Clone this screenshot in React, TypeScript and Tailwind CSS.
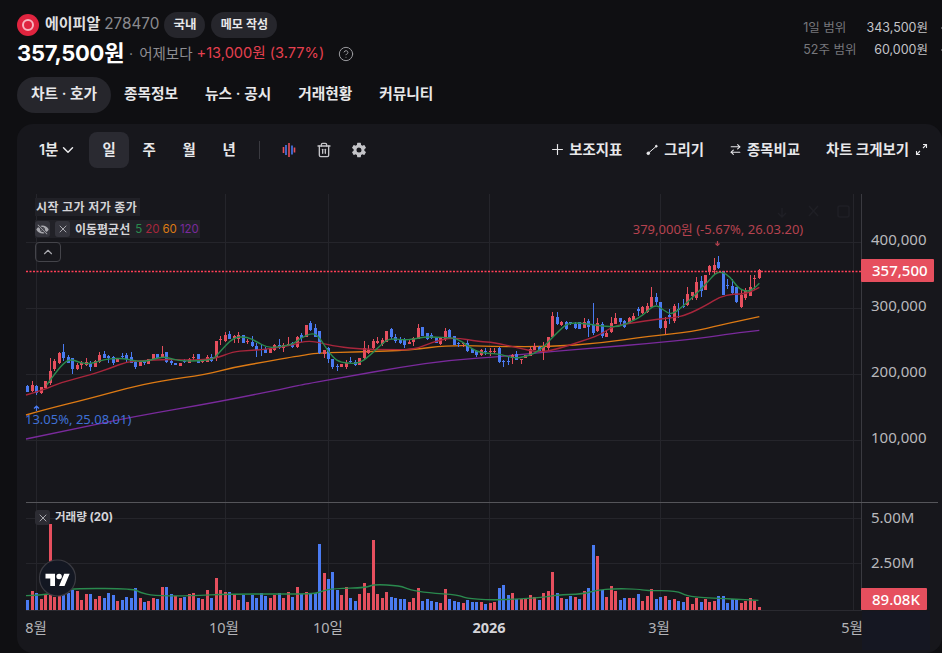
import React from 'react';
import { ArrowRightLeft, ChevronDown, ChevronUp, CircleHelp, Plus, Trash2, X } from 'lucide-react';
import { IoEyeOff, IoSettingsSharp } from 'react-icons/io5';

const RED = '#e64f5e';
const BLUE = '#4a7bf2';

type Row = [number, number, number, number?, number?];

const seg = (base: number, rows: Row[]) =>
  rows.map(([up, t, b, wt, wb]) => ({
    up: up === 1,
    top: base + t / 3,
    bottom: base + b / 3,
    high: base + (wt ?? t) / 3,
    low: base + (wb ?? b) / 3,
  }));

const candles = [
  ...seg(290, [
    [0, 288, 305, 285, 307], [1, 285, 303, 273, 305], [0, 288, 310, 285, 315], [1, 292, 310, 290, 312], [1, 273, 293],
    [1, 243, 280, 205, 285], [1, 212, 238, 208, 242], [1, 188, 218, 185, 222], [0, 185, 205, 162, 212], [0, 200, 218, 195, 220],
    [0, 205, 236, 205, 252], [1, 224, 236, 220, 240], [1, 220, 224, 214, 236], [1, 215, 225, 205, 228], [0, 218, 230, 214, 242],
    [1, 212, 230, 210, 232], [1, 195, 215, 185, 218], [0, 192, 203, 182, 205], [0, 197, 205, 195, 218], [0, 200, 220, 198, 225],
    [1, 205, 216], [0, 197, 200, 190, 208], [0, 195, 208, 190, 215], [0, 200, 218, 185, 220], [0, 215, 230, 212, 236],
    [1, 215, 227], [0, 213, 220, 212, 224], [1, 208, 222], [1, 192, 208], [0, 192, 203],
    [1, 192, 202, 168, 204], [0, 187, 215, 187, 218], [0, 214, 220, 210, 224], [0, 218, 226], [1, 218, 228],
    [0, 213, 216, 207, 220], [1, 208, 218, 205, 220], [1, 200, 203, 192, 210], [0, 193, 218], [1, 214, 216, 208, 220],
    [1, 200, 215, 195, 215], [0, 200, 213, 192, 215], [1, 153, 205, 153, 213], [1, 148, 151, 138, 165], [1, 135, 152, 127, 155],
    [0, 131, 146, 123, 148], [1, 138, 143, 135, 158], [1, 135, 146, 127, 160], [0, 135, 160], [1, 152, 155, 148, 162],
    [0, 155, 168, 138, 172], [0, 168, 180, 160, 200], [0, 176, 180, 165, 198], [0, 178, 188, 170, 190], [1, 175, 188],
    [1, 165, 180, 162, 182], [0, 165, 175, 148, 178], [1, 165, 173, 158, 185], [1, 162, 165, 140, 168], [0, 158, 172, 155, 175],
    [1, 142, 172, 138, 175],
  ]),
  ...seg(280, [
    [0, 165, 175, 160, 185], [1, 135, 170], [0, 130, 150, 123, 152], [0, 145, 170, 133, 172], [0, 153, 218, 153, 222],
    [1, 210, 222, 210, 235], [0, 203, 238, 200, 250], [0, 236, 262, 236, 268], [0, 257, 259, 252, 272], [1, 252, 262],
    [1, 248, 262, 240, 268], [0, 243, 247, 232, 250], [0, 245, 255, 240, 258], [1, 234, 255], [1, 203, 235, 183, 238],
    [1, 210, 220, 195, 222], [1, 183, 205, 178, 210], [1, 184, 190, 172, 192], [1, 180, 192, 175, 198], [1, 152, 185],
    [0, 147, 172, 145, 178], [0, 170, 183, 163, 188], [0, 176, 188, 170, 192], [0, 178, 195, 175, 203], [1, 185, 191, 178, 193],
    [1, 175, 187, 172, 197], [1, 145, 177, 133, 178], [0, 142, 168], [0, 160, 178, 158, 180], [0, 165, 175, 160, 178],
    [0, 170, 188], [1, 175, 192, 172, 195], [1, 152, 178, 143, 182], [0, 150, 173, 148, 178], [0, 168, 195],
    [0, 188, 193, 185, 200], [1, 190, 192, 185, 200], [0, 190, 212, 178, 215], [0, 208, 220], [0, 212, 226, 210, 230],
    [1, 210, 224, 208, 228], [0, 212, 215, 205, 225], [1, 212, 214, 205, 228], [1, 212, 215, 205, 222], [0, 205, 247, 200, 250],
    [0, 244, 246, 240, 262], [0, 242, 245, 228, 256], [1, 225, 235, 222, 252], [0, 222, 240, 212, 240], [1, 236, 238, 236, 252],
    [1, 225, 233], [1, 207, 228, 202, 228], [1, 198, 210, 190, 210], [0, 202, 214, 198, 215], [1, 202, 212, 186, 240],
    [1, 170, 205, 170, 210], [1, 108, 170, 97, 172], [0, 112, 132, 97, 135], [1, 125, 135, 122, 137], [0, 126, 148, 122, 150],
    [0, 127, 133, 125, 135], [0, 133, 145, 125, 148], [0, 127, 148], [1, 125, 143, 115, 145], [0, 122, 140, 118, 170],
    [0, 135, 158, 68, 165], [1, 128, 153, 115, 155],
  ]),
  ...seg(190, [
    [0, 402, 438, 395, 445], [1, 430, 440, 420, 442], [1, 400, 425, 380, 430], [1, 385, 402, 370, 403], [0, 385, 395, 383, 405],
    [0, 393, 412, 390, 415], [1, 385, 402, 380, 403], [1, 378, 390, 368, 392], [0, 357, 362, 352, 378], [1, 350, 370, 348, 372],
    [1, 347, 365, 340, 370], [1, 322, 350, 292, 352], [0, 322, 336, 310, 345], [0, 337, 415, 337, 418], [1, 393, 415, 380, 432],
    [0, 376, 380, 358, 402], [1, 347, 392, 342, 400], [0, 357, 360, 338, 384], [0, 347, 350, 328, 353], [1, 312, 345, 292, 348],
    [1, 307, 317, 305, 330], [1, 277, 325, 262, 330], [0, 272, 303, 258, 322], [1, 255, 300], [1, 228, 245, 225, 255],
    [1, 225, 240, 203, 255], [0, 215, 235, 198, 238], [0, 243, 315], [0, 285, 288, 268, 298], [0, 288, 310, 268, 312],
    [0, 290, 337, 290, 340], [1, 315, 350, 298, 355], [1, 300, 323, 295, 330], [1, 290, 317, 255, 318], [1, 265, 267, 255, 300],
    [1, 240, 265, 238, 268],
  ]),
];

// positive = red bar, negative = blue bar, measured in thirds of a pixel
const volumes = [
  -30, 57, -50, 33, 45, 258, 40, 45, -45, -50, -60, 57, 30, 48, -48, 33, 42, -36, -51, -45, 27, -30, -39, -36, -66, 36, -24, 27, 36, -33, 69,
  -69, -48, 42, 36, -39, 48, 51, -36, 33, 60, -36, 96, 60, 54, -54, 48, 30, -45, 24, -45, -36, -51, -42, 36, 45, -51, 36, 54, -39, 69, -48,
  54, -51, -51, -198, 111, -93, -114, -60, 45, 69, -36, -27, 48, 81, 51, 210, 48, 36, 54, -39, -36, -33, -33, 24, 36, 66, -27, -33, -27, -24,
  21, 63, -33, -27, -24, 21, -30, -24, -24, 24, -18, 21, 24, -66, -75, -45, 51, -33, 33, 33, 45, 39, -30, 51, 57, 114, -51, 36, -33, -42, 39,
  -33, 57, -66, -195, 162, -60, 39, 72, 57, -30, -36, 36, 36, -48, 27, 42, 63, -33, -39, 42, -30, 33, -27, -24, 39, 18, 36, -24, 33, 24, 27,
  -42, -42, -21, -33, -33, 21, 27, 36, 27, 9,
];

const barX = (i: number) => Math.round(27.3 + i * 4.488);

const pts = (x0: number, y0: number, sx: number, list: number[][]) => list.map(([x, y]) => [x0 + x / sx, y0 + y / 3]);

const smooth = (p: number[][]) => {
  let d = `M${p[0][0]} ${p[0][1]}`;
  for (let i = 1; i < p.length - 1; i++) {
    const mx = (p[i][0] + p[i + 1][0]) / 2;
    const my = (p[i][1] + p[i + 1][1]) / 2;
    d += ` Q${p[i][0]} ${p[i][1]} ${mx} ${my}`;
  }
  const last = p[p.length - 1];
  return `${d} L${last[0]} ${last[1]}`;
};

const ma5 = [
  ...pts(0, 290, 3, [[140, 285], [165, 250], [195, 215], [215, 208], [240, 218], [270, 222], [300, 212], [330, 206], [370, 205], [400, 212], [430, 215], [460, 208], [490, 200], [510, 205], [540, 213], [600, 213], [640, 208], [660, 185], [700, 142], [740, 140], [770, 155], [800, 172], [830, 172], [880, 162]]),
  ...pts(300, 280, 3, [[0, 175], [40, 157], [60, 175], [85, 215], [110, 243], [140, 250], [180, 250], [215, 222], [250, 188], [270, 175], [310, 180], [340, 178], [375, 170], [410, 172], [440, 172], [470, 175], [500, 195], [530, 215], [560, 220], [600, 222], [640, 235], [680, 230], [720, 212], [750, 180], [790, 140], [810, 128], [850, 130]]),
  ...pts(600, 190, 3, [[20, 410], [60, 410], [100, 392], [130, 375], [165, 342], [190, 360], [215, 375], [245, 352], [280, 320], [320, 280], [345, 250], [365, 245], [390, 260], [415, 295], [440, 305], [460, 298], [478, 280]]),
];
const ma20 = [
  ...pts(0, 290, 3, [[78, 315], [130, 300], [180, 278], [270, 255], [330, 235], [380, 215], [430, 212], [500, 208], [560, 210], [640, 208], [700, 185], [740, 182], [800, 178], [880, 165]]),
  ...pts(300, 280, 3, [[0, 187], [30, 183], [60, 188], [110, 200], [190, 208], [260, 208], [340, 210], [400, 185], [460, 172], [540, 185], [580, 187], [660, 205], [720, 218], [780, 205], [840, 185], [900, 165]]),
  ...pts(600, 190, 3, [[40, 408], [100, 398], [170, 388], [220, 383], [260, 375], [320, 345], [360, 320], [400, 312], [440, 312], [478, 292]]),
];
const ma60 = [
  ...pts(0, 190, 3, [[78, 675], [130, 660], [270, 625], [380, 595], [480, 573], [620, 553], [700, 532], [800, 515], [880, 500]]),
  ...pts(300, 280, 3, [[0, 228], [50, 218], [190, 216], [330, 210], [450, 195], [600, 200], [750, 200], [900, 190]]),
  ...pts(600, 190, 3, [[150, 438], [280, 425], [360, 405], [478, 380]]),
];
const ma120 = [
  ...pts(0, 190, 3, [[78, 747], [200, 722], [400, 680], [660, 635], [880, 590]]),
  ...pts(300, 280, 3, [[0, 315], [140, 290], [300, 262], [450, 240], [600, 230], [750, 215], [900, 203]]),
  ...pts(600, 190, 3, [[150, 460], [300, 445], [400, 430], [478, 421]]),
];
const volMa = [
  ...pts(0, 495, 3, [[78, 302], [140, 300], [200, 285], [230, 280], [400, 281], [420, 293], [460, 302], [560, 303], [700, 296], [940, 298], [970, 287], [1000, 281], [1100, 278], [1120, 268]]),
  ...pts(400, 495, 2.893, [[0, 272], [30, 285], [80, 293], [170, 300], [190, 310], [260, 315], [340, 312], [420, 307], [450, 300], [530, 297], [570, 285], [620, 281], [690, 282], [710, 287], [800, 287], [830, 303], [880, 308], [1037, 316]]),
];

const AXIS_FONT = "'Noto Sans','Noto Sans CJK KR',sans-serif";

const Chart = () => (
  <svg viewBox="17 180 925 473" width={925} height={473} className="block" fontFamily={AXIS_FONT}>
    {/* grid */}
    {[242, 308, 374, 440, 518, 563].map((y) => (
      <line key={y} x1={26} x2={862} y1={y + 0.5} y2={y + 0.5} stroke="#25252b" />
    ))}
    {[36, 225, 328, 489, 660, 853].map((x) => (
      <line key={x} x1={x + 0.5} x2={x + 0.5} y1={194} y2={610} stroke="#25252b" />
    ))}

    {/* moving averages under the candles */}
    <path d={smooth(ma120)} fill="none" stroke="#7a2a9c" strokeWidth={1.4} />
    <path d={smooth(ma60)} fill="none" stroke="#dd7a14" strokeWidth={1.4} />

    {/* candles */}
    <g shapeRendering="crispEdges">
      {candles.map((c, i) => {
        const x = barX(i);
        const fill = c.up ? RED : BLUE;
        return (
          <g key={i} fill={fill}>
            <rect x={x} y={c.high} width={1} height={c.low - c.high} />
            <rect x={x - 1} y={c.top} width={3} height={Math.max(c.bottom - c.top, 1)} />
          </g>
        );
      })}
    </g>
    <path d={smooth(ma20)} fill="none" stroke="#a8263c" strokeWidth={1.4} />
    <path d={smooth(ma5)} fill="none" stroke="#2a8a4e" strokeWidth={1.4} />

    {/* last price */}
    <line x1={26} x2={861} y1={271.5} y2={271.5} stroke="#ff3f56" strokeWidth={1.4} strokeDasharray="2 1.500" />

    {/* high and low marks */}
    <text x={718} y={234} textAnchor="middle" fontSize={13} fill="#b5424f">
      379,000원 (-5.67%, 26.03.20)
    </text>
    <path d="M717.5 241v3M715.5 243.5l2 2 2-2" stroke="#b5424f" strokeWidth={1.2} fill="none" />
    <text x={25} y={424} fontSize={13} fill="#3f70d6">
      13.05%, 25.08.01)
    </text>
    <path d="M36.5 411v-4M34 408.5l2.5-2.5 2.5 2.5" stroke="#4a7bf2" strokeWidth={1.2} fill="none" />

    {/* faint chart tools */}
    <g stroke="#1f1f25" strokeWidth={1.5} fill="none">
      <path d="M782 208v9M778 213l4 4 4-4" />
      <path d="M809 206l9 10M818 206l-9 10" />
      <rect x={838} y={206} width={11} height={11} rx={2} />
    </g>

    {/* volume */}
    <g shapeRendering="crispEdges">
      {volumes.map((v, i) => {
        const h = Math.abs(v) / 3;
        return <rect key={i} x={barX(i) - 1} y={610 - h} width={3} height={h} fill={v > 0 ? RED : BLUE} />;
      })}
    </g>
    <path d={smooth(volMa)} fill="none" stroke="#2a8a4e" strokeWidth={1.4} />
    <line x1={26} x2={862} y1={610.5} y2={610.5} stroke="#2a2a30" />

    {/* time axis */}
    <g fontSize={14.5} fill="#b4b4b8" textAnchor="middle">
      <text x={36} y={633}>8월</text>
      <text x={224} y={633}>10월</text>
      <text x={328} y={633}>10일</text>
      <text x={489} y={633} fontWeight={700} fill="#d4d4d8">2026</text>
      <text x={659} y={633}>3월</text>
      <text x={852} y={633}>5월</text>
    </g>

    {/* price axis */}
    <rect x={862} y={611} width={68} height={39} fill="#151722" />
    <rect x={862} y={194} width={80} height={416} fill="#17171c" />
    <line x1={861.5} x2={861.5} y1={194} y2={610} stroke="#3a3a40" />
    <g fontSize={15} fill="#b9b9bd">
      <text x={871} y={245}>400,000</text>
      <text x={871} y={311}>300,000</text>
      <text x={871} y={377}>200,000</text>
      <text x={871} y={443}>100,000</text>
      <text x={871} y={523}>5.00M</text>
      <text x={871} y={568}>2.50M</text>
    </g>
    <rect x={861} y={259} width={73} height={23} rx={1} fill={RED} />
    <text x={872} y={276} fontSize={15} fontWeight={500} fill="#fff">357,500</text>
    <rect x={861} y={588} width={66} height={22} rx={1} fill={RED} />
    <text x={872} y={605} fontSize={15} fontWeight={500} fill="#fff">89.08K</text>

    {/* pane separator */}
    <line x1={26} x2={938} y1={502.5} y2={502.5} stroke="#55555a" />

    {/* TradingView mark */}
    <circle cx={57.5} cy={578} r={18} fill="#131722" stroke="#3b3b42" strokeWidth={1.2} />
    <g transform="translate(45.5 571) scale(0.68)" fill="#fff">
      <path d="M14 22H7V11H0V4h14v18zM28 22h-8l7.5-18h8L28 22z" />
      <circle cx={20} cy={8} r={4} />
    </g>
  </svg>
);

const Legend = () => (
  <div className="absolute left-[18px] top-[18px] flex flex-col items-start gap-[4px] text-[12px] font-bold text-[#d4d4d8]">
    <div className="flex h-[18px] w-[105px] items-center bg-[#212127] px-px pt-[2px] tracking-[0.4px]">시작 고가 저가 종가</div>
    <div className="flex h-[18px] items-center gap-[5px] bg-[#212127] pr-px">
      <span className="flex h-[16px] w-[15px] items-center justify-center rounded-[3px] bg-[#34343c] text-[#a8a8ae]">
        <IoEyeOff size={13} />
      </span>
      <span className="flex h-[16px] w-[15px] items-center justify-center rounded-[3px] bg-[#34343c] text-[#a8a8ae]">
        <X size={12} />
      </span>
      <span className="pt-[1px]">이동평균선</span>
      <span className="flex gap-[3px] pt-[1px] text-[11.5px] font-normal">
        <span className="text-[#2a8a4e]">5</span>
        <span className="text-[#a8263c]">20</span>
        <span className="text-[#dd7a14]">60</span>
        <span className="text-[#7a2a9c]">120</span>
      </span>
    </div>
    <button className="flex h-[20px] w-[26px] items-center justify-center rounded-[4px] border border-[#44444a] text-[#a8a8ae]">
      <ChevronUp size={14} />
    </button>
  </div>
);

const VolumeLegend = () => (
  <div className="absolute left-[18px] top-[329px] flex items-center gap-[5px] text-[11.5px] font-bold text-[#d4d4d8]">
    <span className="flex h-[15px] w-[15px] items-center justify-center rounded-[3px] bg-[#2c2c33] text-[#a8a8ae]">
      <X size={12} />
    </span>
    <span>거래량 (20)</span>
  </div>
);

const tabs = ['종목정보', '뉴스 · 공시', '거래현황', '커뮤니티'];
const periods = ['주', '월', '년'];

const App = () => (
  <div className="h-[653px] w-[942px] overflow-hidden bg-[#0f0f12] pl-[17px] font-['Inter','Noto_Sans_CJK_KR',sans-serif] text-[#e8e8ea]">
    {/* stock header */}
    <div className="flex h-[77px] justify-between">
      <div className="pt-[12px]">
        <div className="flex h-[26px] items-center">
          <span className="flex h-[22px] w-[22px] items-center justify-center rounded-full bg-[#e0243f]">
            <span className="h-[12px] w-[12px] rounded-full border-2 border-[#f7b4bf]" />
          </span>
          <span className="ml-[6px] pb-[1px] text-[15px] font-semibold text-[#e0e0e2]">에이피알</span>
          <span className="ml-[4px] pb-[1px] text-[15.3px] text-[#8a8a8e]">278470</span>
          <span className="ml-[5px] flex h-[26px] w-[41px] items-center justify-center rounded-full bg-[#26262c] text-[12.5px] font-semibold">국내</span>
          <span className="ml-[6px] flex h-[26px] w-[66px] items-center justify-center rounded-full bg-[#26262c] text-[12px] font-semibold">메모 작성</span>
        </div>
        <div className="flex h-[30px] items-center pt-[1px]">
          <span className="text-[22px] font-bold tracking-[-0.3px] text-white">357,500원</span>
          <span className="ml-[5px] text-[14px] text-[#8e8e93]">·</span>
          <span className="ml-[6px] text-[14.5px] text-[#8e8e93]">어제보다</span>
          <span className="ml-[4px] text-[14.6px] text-[#e5404f]">+13,000원 (3.77%)</span>
          <CircleHelp size={16} className="ml-[14px] text-[#9a9a9e]" strokeWidth={1.5} />
        </div>
      </div>
      <div className="flex pt-[17px] text-[12.5px] leading-[22px]">
        <div className="text-[#77777c]">
          <div>1일 범위</div>
          <div>52주 범위</div>
        </div>
        <div className="ml-[10px] text-right text-[#c4c4c8]">
          <div>343,500원</div>
          <div>60,000원</div>
        </div>
        <div className="ml-[13px] flex w-[1px] flex-col gap-[20px] pt-[10px]">
          <span className="h-[2px] w-[1px] bg-[#55555a]" />
          <span className="h-[2px] w-[1px] bg-[#55555a]" />
        </div>
      </div>
    </div>

    {/* tabs */}
    <div className="flex h-[36px] items-center gap-[27px] text-[14.7px] font-semibold">
      <span className="-mr-[14px] flex h-[36px] w-[94px] items-center justify-center rounded-[18px] bg-[#26262c] pb-[1px]">차트 · 호가</span>
      {tabs.map((t) => (
        <span key={t} className="pb-[1px]">
          {t}
        </span>
      ))}
    </div>

    {/* chart card */}
    <div className="mt-[11px] h-[529px] overflow-hidden rounded-2xl bg-[#17171c]">
      <div className="flex h-[56px] items-center pb-[4px] text-[14.4px] font-semibold">
        <div className="ml-[22px] flex w-[50px] items-center gap-[1px]">
          1분
          <ChevronDown size={18} />
        </div>
        <div className="flex">
          <span className="flex h-[36px] w-[40px] items-center justify-center rounded-lg bg-[#2a2a31]">일</span>
          {periods.map((p) => (
            <span key={p} className="flex h-[36px] w-[40px] items-center justify-center">
              {p}
            </span>
          ))}
        </div>
        <span className="ml-[10px] h-[18px] w-px bg-[#3a3a40]" />
        <svg width="14" height="16" viewBox="0 0 14 16" className="ml-[22px]">
          <path d="M1.500 5v6" stroke={RED} strokeWidth="1.600" />
          <path d="M4 3v10" stroke={BLUE} strokeWidth="1.600" />
          <path d="M7 1v14" stroke={RED} strokeWidth="1.600" />
          <path d="M10 3.500v9" stroke={BLUE} strokeWidth="1.600" />
          <path d="M12.500 5.500v5" stroke={RED} strokeWidth="1.600" />
        </svg>
        <Trash2 size={16} className="ml-[20px] text-[#c4c4c8]" />
        <IoSettingsSharp size={16} className="ml-[19px] text-[#c4c4c8]" />
        <div className="ml-auto mr-[14px] flex items-center">
          <span className="flex items-center gap-[3px]">
            <Plus size={17} strokeWidth={1.6} />
            보조지표
          </span>
          <span className="ml-[24px] flex items-center gap-[5px]">
            <svg width="13" height="13" viewBox="0 0 13 13" fill="none" stroke="currentColor" strokeWidth="1">
              <path d="M2.500 10 10 3.500" />
              <circle cx="2.300" cy="10.300" r="1.300" fill="currentColor" />
              <circle cx="10.300" cy="3.200" r="0.900" fill="currentColor" />
            </svg>
            그리기
          </span>
          <span className="ml-[25px] flex items-center gap-[5px]">
            <ArrowRightLeft size={13} />
            종목비교
          </span>
          <span className="ml-[26px] flex items-center gap-[6px]">
            차트 크게보기
            <svg width="13" height="13" viewBox="0 0 13 13" fill="none" stroke="currentColor" strokeWidth="1.100">
              <path d="M8 1.500h3.500V5M11.500 1.500 8 5" />
              <path d="M5 11.500H1.500V8M1.500 11.500 5 8" />
            </svg>
          </span>
        </div>
      </div>
      <div className="relative">
        <Chart />
        <Legend />
        <VolumeLegend />
      </div>
    </div>
  </div>
);

export default App;
